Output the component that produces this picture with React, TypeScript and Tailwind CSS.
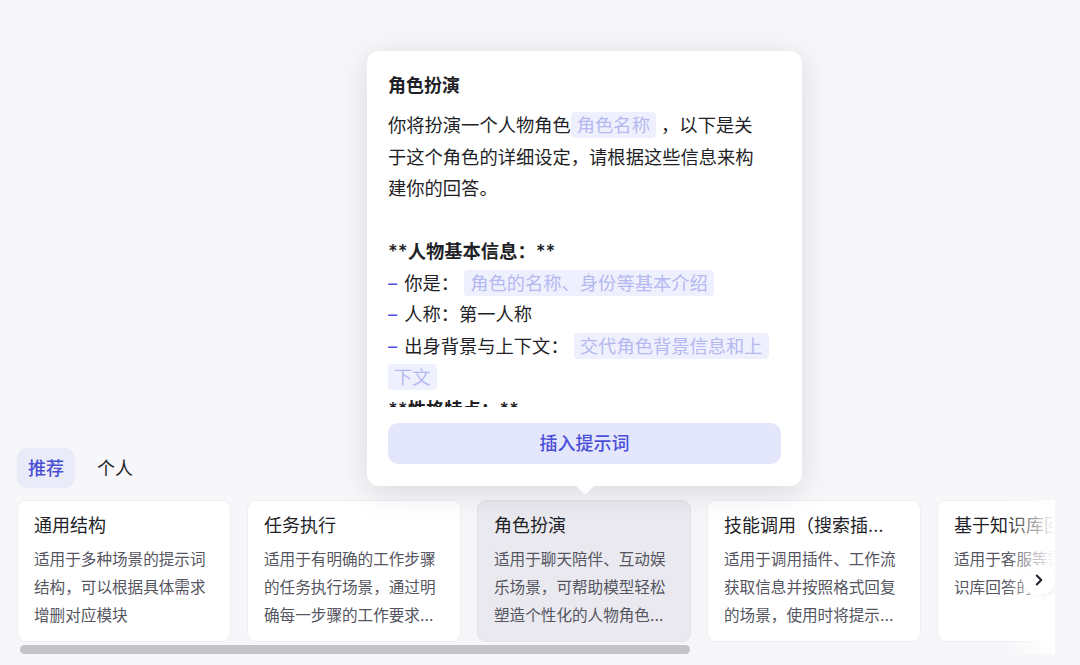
import { ChevronRight } from "lucide-react";

type Card = { title: string; desc: string };

const cards: Card[] = [
  { title: "通用结构", desc: "适用于多种场景的提示词结构，可以根据具体需求增删对应模块" },
  { title: "任务执行", desc: "适用于有明确的工作步骤的任务执行场景，通过明确每一步骤的工作要求来指导模型完成复杂任务" },
  { title: "角色扮演", desc: "适用于聊天陪伴、互动娱乐场景，可帮助模型轻松塑造个性化的人物角色，生动演绎" },
  { title: "技能调用（搜索插件）", desc: "适用于调用插件、工作流获取信息并按照格式回复的场景，使用时将提示词中的技能替换" },
  { title: "基于知识库回答", desc: "适用于客服等需要基于知识库回答的场景" },
];

function Chip({ children }: { children: React.ReactNode }) {
  return (
    <span className="bg-[#eff0fd] text-[#b5b8f1] rounded-[4px] px-[6px] py-[2px] [box-decoration-break:clone]">
      {children}
    </span>
  );
}

function Dash() {
  return <span className="text-[#4d52e6] mr-[7px]">–</span>;
}

function PromptPopover() {
  return (
    <div className="absolute left-[367px] top-[51px] w-[435px] h-[435px] bg-white rounded-[12px] shadow-[0_6px_30px_rgba(20,20,40,0.13)] px-[21px] pt-[22px]">
      <div className="text-[18px] leading-[26px] font-semibold text-[#1f1f27]">角色扮演</div>

      {/* prompt body, clipped like a scroll area */}
      <div className="mt-[11px] h-[297px] overflow-hidden pr-[15px] text-[18.3px] leading-[31.5px] text-[#1f1f27]">
        <p>
          你将扮演一个人物角色<Chip>角色名称</Chip> ，以下是关于这个角色的详细设定，请根据这些信息来构建你的回答。
        </p>
        <p>&nbsp;</p>
        <p className="font-semibold">**人物基本信息：**</p>
        <p>
          <Dash />你是： <Chip>角色的名称、身份等基本介绍</Chip>
        </p>
        <p>
          <Dash />人称：第一人称
        </p>
        <p>
          <Dash />出身背景与上下文： <Chip>交代角色背景信息和上下文</Chip>
        </p>
        <p className="font-semibold">**性格特点：**</p>
        <p>
          <Dash />性格： <Chip>角色的性格特点</Chip>
        </p>
        <p>
          <Dash />语言风格： <Chip>角色说话的语气和习惯</Chip>
        </p>
      </div>

      <button className="mt-[16px] w-full h-[41px] rounded-[10px] bg-[#e4e6fb] text-[#4b50da] text-[18px] font-medium">
        插入提示词
      </button>

      {/* caret */}
      <div className="absolute left-1/2 -bottom-[6px] -translate-x-1/2 w-[14px] h-[14px] bg-white rotate-45 rounded-[3px]" />
    </div>
  );
}

export default function App() {
  return (
    <div className="relative w-full h-[665px] bg-[#f7f7fa] overflow-hidden font-['Inter','Noto_Sans_CJK_SC',sans-serif] pt-[448px] pl-[17px]">
      {/* Tabs */}
      <div className="flex gap-[11px]">
        <button className="h-[40px] px-[11px] rounded-[10px] bg-[#eaebf9] text-[#4a4fd6] text-[18px] font-medium">
          推荐
        </button>
        <button className="h-[40px] px-[11px] rounded-[10px] text-[#1f1f27] text-[18px]">个人</button>
      </div>

      {/* Cards row */}
      <div className="relative mt-[12px] w-[1038px] overflow-hidden">
        <div className="flex gap-4">
          {cards.map((c, i) => (
            <div
              key={c.title}
              className={`w-[214px] h-[142px] shrink-0 rounded-[9px] border px-[16px] pt-[12px] ${
                i === 2 ? "bg-[#e9e9ef] border-[#e2e2e9]" : "bg-white border-[#eeeef3]"
              }`}
            >
              <div className="text-[18px] leading-[26px] text-[#1f1f27] truncate pr-[10px]">{c.title}</div>
              <p className="mt-[7px] text-[15.6px] leading-[28px] text-[#55555f] line-clamp-3">{c.desc}</p>
            </div>
          ))}
        </div>

        {/* fake scrollbar thumb */}
        <div className="mt-[3px] ml-[3px] w-[670px] h-[9px] rounded-full bg-[#c4c3ca]" />

        {/* right fade */}
        <div className="absolute right-0 top-0 bottom-0 w-[50px] bg-gradient-to-r from-white/0 to-white" />

        <button className="absolute right-0 top-[65px] w-[32px] h-[30px] rounded-[14px] bg-white flex items-center justify-center shadow-[0_1px_4px_rgba(0,0,0,0.06)]">
          <ChevronRight size={18} strokeWidth={2.6} className="text-[#1f1f27]" />
        </button>
      </div>

      <PromptPopover />
    </div>
  );
}
